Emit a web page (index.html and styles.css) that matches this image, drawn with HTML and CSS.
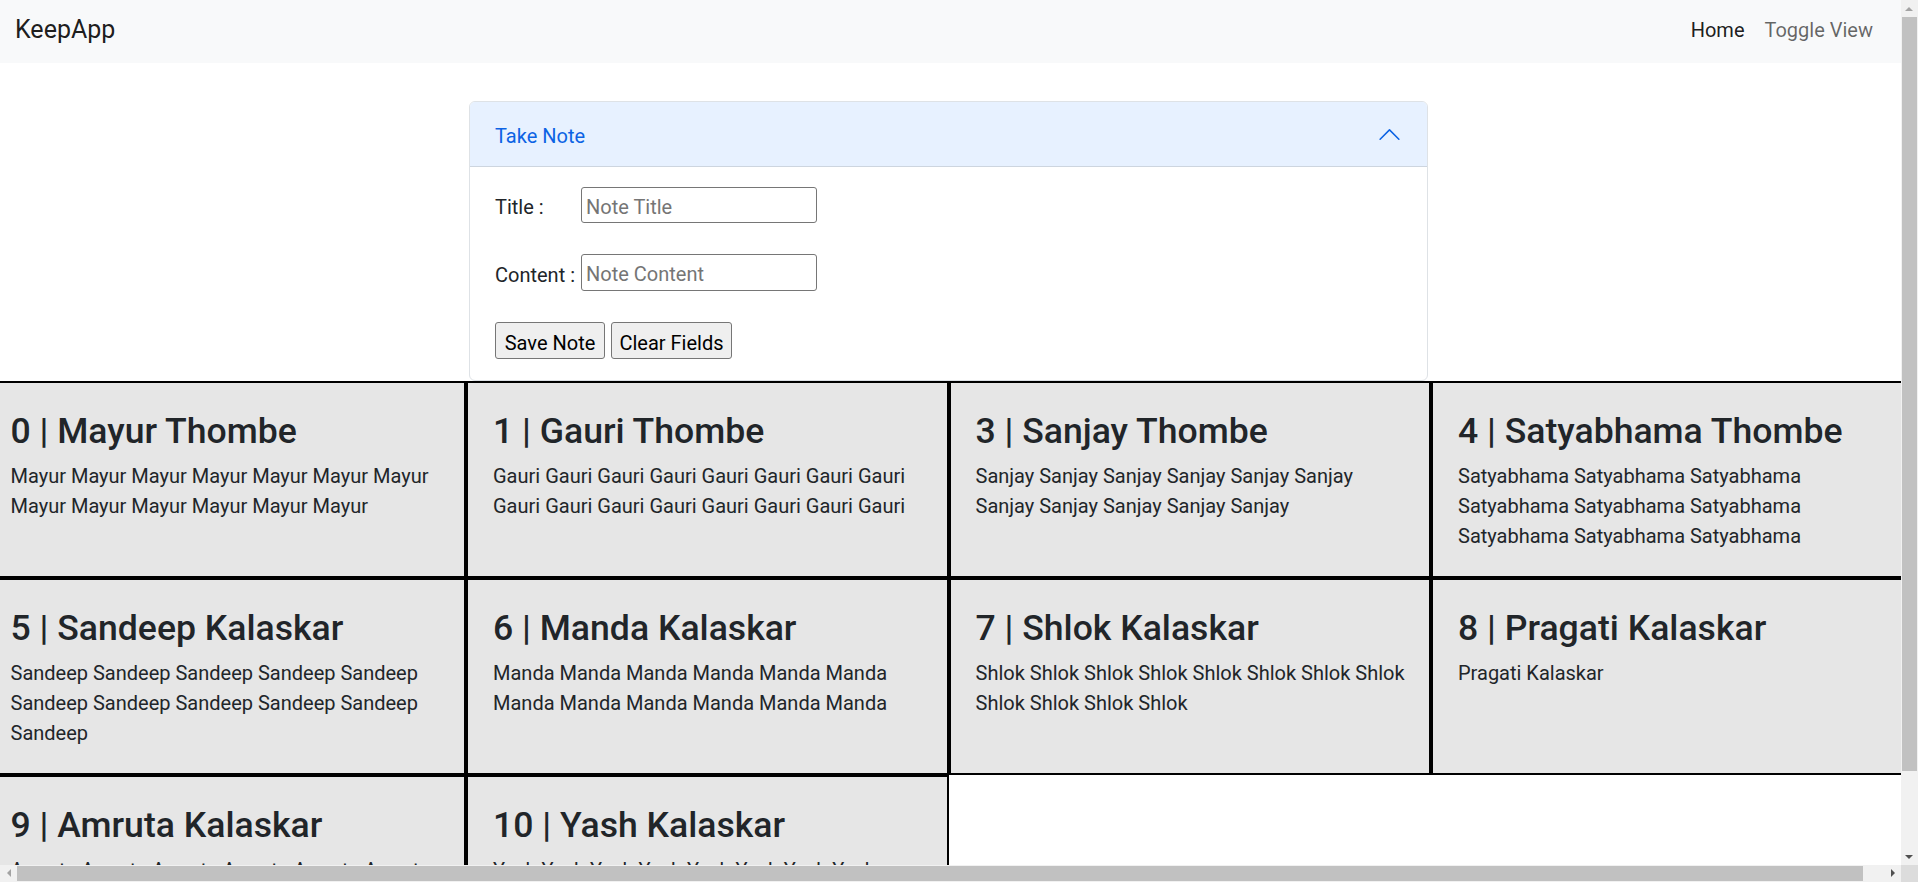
FILE: index.html
```html
<!DOCTYPE html>
<html lang="en">
<head>
<meta charset="utf-8">
<title>KeepApp</title>
<link rel="stylesheet" href="styles.css">
</head>
<body>
<div class="page">
  <nav class="navbar">
    <span class="brand">KeepApp</span>
    <ul class="nav">
      <li><a class="nav-link active" href="#">Home</a></li>
      <li><a class="nav-link" href="#">Toggle View</a></li>
    </ul>
  </nav>

  <section class="accordion">
    <div class="acc-header">
      <span>Take Note</span>
      <svg class="chevron" viewBox="0 0 16 16" width="25" height="25"><path transform="rotate(180 8 8)" d="M1.646 4.646a.5.5 0 0 1 .708 0L8 10.293l5.646-5.647a.5.5 0 0 1 .708.708l-6 6a.5.5 0 0 1-.708 0l-6-6a.5.5 0 0 1 0-.708z"/></svg>
    </div>
    <div class="acc-body">
      <div class="field field-title"><label>Title :</label><input type="text" placeholder="Note Title"></div>
      <div class="field field-content"><label>Content :</label><input type="text" placeholder="Note Content"></div>
      <div class="actions"><button class="btn-save">Save Note</button><button class="btn-clear">Clear Fields</button></div>
    </div>
  </section>

  <section class="notes">
    <article class="note"><h3>0 | Mayur Thombe</h3><p>Mayur Mayur Mayur Mayur Mayur Mayur Mayur Mayur Mayur Mayur Mayur Mayur Mayur</p></article>
    <article class="note"><h3>1 | Gauri Thombe</h3><p>Gauri Gauri Gauri Gauri Gauri Gauri Gauri Gauri Gauri Gauri Gauri Gauri Gauri Gauri Gauri Gauri</p></article>
    <article class="note"><h3>3 | Sanjay Thombe</h3><p>Sanjay Sanjay Sanjay Sanjay Sanjay Sanjay Sanjay Sanjay Sanjay Sanjay Sanjay</p></article>
    <article class="note"><h3>4 | Satyabhama Thombe</h3><p>Satyabhama Satyabhama Satyabhama Satyabhama Satyabhama Satyabhama Satyabhama Satyabhama Satyabhama</p></article>
    <article class="note"><h3>5 | Sandeep Kalaskar</h3><p>Sandeep Sandeep Sandeep Sandeep Sandeep Sandeep Sandeep Sandeep Sandeep Sandeep Sandeep</p></article>
    <article class="note"><h3>6 | Manda Kalaskar</h3><p>Manda Manda Manda Manda Manda Manda Manda Manda Manda Manda Manda Manda</p></article>
    <article class="note"><h3>7 | Shlok Kalaskar</h3><p>Shlok Shlok Shlok Shlok Shlok Shlok Shlok Shlok Shlok Shlok Shlok Shlok</p></article>
    <article class="note"><h3>8 | Pragati Kalaskar</h3><p>Pragati Kalaskar</p></article>
    <article class="note"><h3>9 | Amruta Kalaskar</h3><p>Amruta Amruta Amruta Amruta Amruta Amruta Amruta Amruta Amruta Amruta</p></article>
    <article class="note"><h3>10 | Yash Kalaskar</h3><p>Yash Yash Yash Yash Yash Yash Yash Yash Yash Yash Yash Yash Yash Yash</p></article>
  </section>
</div>

<div class="vscroll"><span class="sb-arrow sb-up"></span><span class="sb-thumb"></span><span class="sb-fill"></span><span class="sb-arrow sb-down"></span></div>
<div class="hscroll"><span class="sb-arrow sb-left"></span><span class="sb-thumb"></span><span class="sb-fill"></span><span class="sb-arrow sb-right"></span></div>
<div class="sb-corner"></div>
</body>
</html>
```
FILE: styles.css
```css
* { box-sizing: border-box; }
html { overflow: hidden; }
body {
  margin: 0;
  font-family: Roboto, "Noto Sans", sans-serif;
  font-size: 20px;
  line-height: 1.5;
  color: #212529;
  background: #fff;
}
.page { width: 1901px; }

/* navbar */
.navbar {
  height: 63px;
  background: #f8f9fa;
  display: flex;
  align-items: center;
  justify-content: space-between;
  padding: 0 18px 4px 15px;
}
.brand { font-size: 25px; color: rgba(0,0,0,.9); }
.nav { list-style: none; margin: 0; padding: 0; display: flex; }
.nav-link { display: block; padding: 0 10px; color: rgba(0,0,0,.6); text-decoration: none; font-size: 20px; }
.nav-link.active { color: rgba(0,0,0,.9); }

/* accordion */
.accordion {
  width: 959px;
  margin: 38px 0 0 469px;
  border: 1px solid #dee2e6;
  border-radius: 6px;
  overflow: hidden;
  background: #fff;
}
.acc-header {
  height: 65px;
  background: #e7f1ff;
  color: #0c63e4;
  border-bottom: 1px solid #cdd5df;
  display: flex;
  align-items: center;
  justify-content: space-between;
  padding: 3px 25px 0;
}
.chevron { fill: #0c63e4; display: block; margin-top: -3px; }
.acc-body { padding: 20px 25px 21px; }
.field { display: flex; align-items: center; }
.field-title { height: 36px; margin-bottom: 31px; }
.field-content { height: 37px; margin-bottom: 31px; }
.field label { width: 86px; padding-top: 4px; }
.field input {
  width: 236px;
  height: 100%;
  border: 1px solid #767676;
  border-radius: 3px;
  padding: 3px 4px 0;
  font: inherit;
  color: #000;
  background: #fff;
}
.field input::placeholder { color: #757575; }
.actions { display: flex; gap: 6px; height: 37px; }
.actions button {
  height: 100%;
  padding: 5px 6px 0;
  font: inherit;
  white-space: nowrap;
  color: #000;
  background: #efefef;
  border: 1px solid #767676;
  border-radius: 3px;
}
.btn-save { width: 110px; }
.btn-clear { width: 121px; }

/* notes */
.notes {
  display: flex;
  flex-wrap: wrap;
  width: 1930px;
  margin-left: -16.5px;
}
.note {
  width: 482.5px;
  border: 2px solid #000;
  background: #e6e6e6;
  padding: 27px 23px 5px 25px;
}
.note h3 { margin: 0 0 9px; font-size: 35.6px; font-weight: 500; line-height: 42px; }
.note p { margin: 0 0 20px; }

/* fake scrollbars (overlays) */
.vscroll, .hscroll, .sb-corner { position: fixed; background: #f1f1f1; display: flex; }
.vscroll { top: 0; right: 0; width: 17px; height: 865px; flex-direction: column; }
.hscroll { left: 0; bottom: 0; height: 17px; width: 1901px; }
.sb-corner { right: 0; bottom: 0; width: 17px; height: 17px; background: #dcdcdc; }
.sb-arrow { flex: 0 0 17px; width: 17px; height: 17px; position: relative; }
.sb-arrow::after { content: ""; position: absolute; width: 0; height: 0; border: 4px solid transparent; }
.sb-up::after { left: 4px; top: 3px; border-bottom: 4px solid #a3a3a3; }
.sb-down::after { left: 4px; top: 7px; border-top: 4px solid #505050; }
.sb-left::after { left: 3px; top: 4px; border-right: 4px solid #a3a3a3; }
.sb-right::after { left: 7px; top: 4px; border-left: 4px solid #505050; }
.vscroll .sb-thumb { flex: 0 0 754px; margin: 0 1px; background: #c1c1c1; }
.hscroll .sb-thumb { flex: 0 0 1846px; margin: 1px 0; background: #c1c1c1; }
.sb-fill { flex: 1; }
```
